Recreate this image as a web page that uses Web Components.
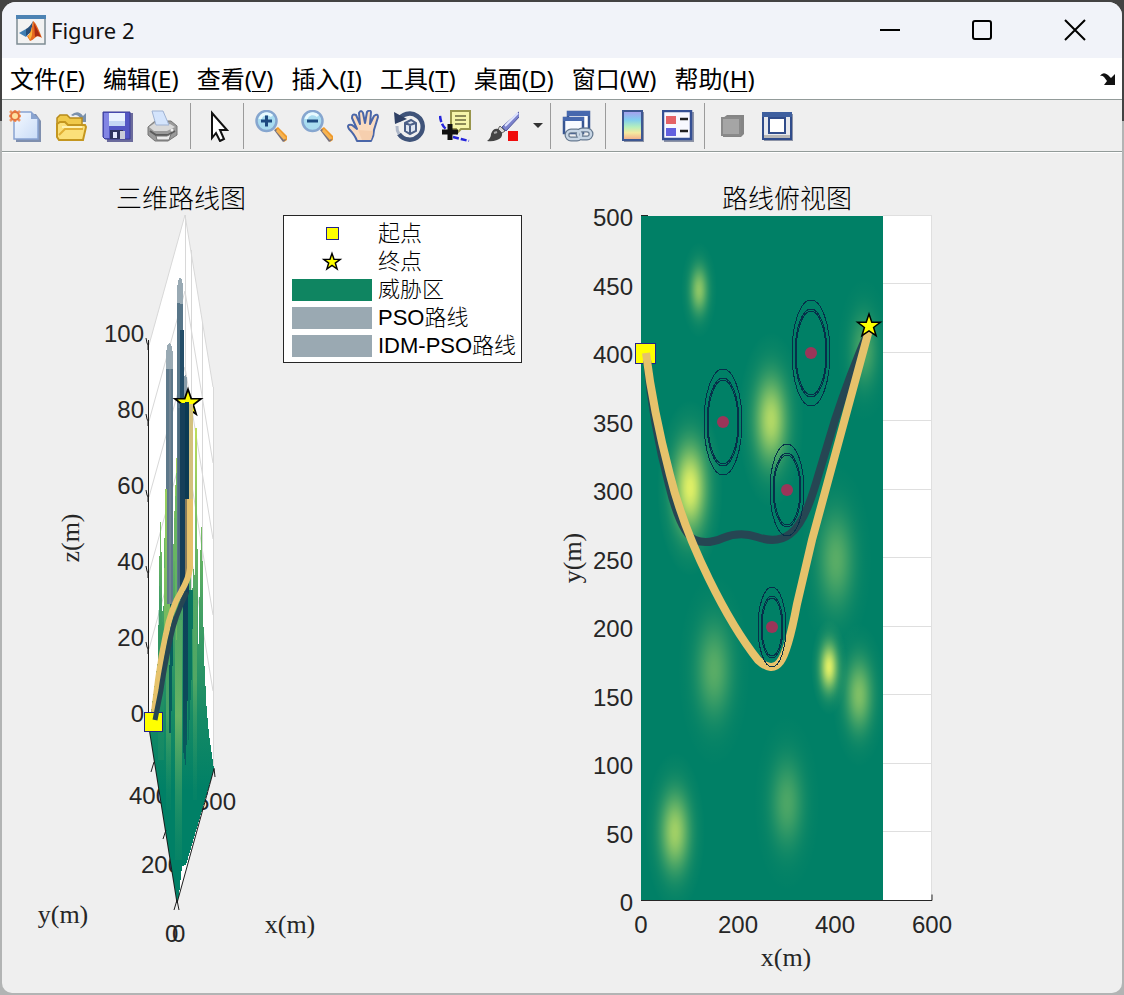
<!DOCTYPE html>
<html lang="zh-CN">
<head>
<meta charset="utf-8">
<title>Figure 2</title>
<style>
  html { height: 100%; background: #9c9c9c; }
  body {
    margin: 0; min-height: 100%; box-sizing: border-box; padding: 2px; display: flex;
    background: linear-gradient(#434343 0 121px, #b2b4b4 121px);
    font-family: "Noto Sans", "Noto Sans CJK SC", sans-serif;
  }
</style>
</head>
<body>
<figure-window>
  <title-bar slot="title">Figure 2</title-bar>
  <menu-bar slot="menu">
    <menu-item key="F">文件</menu-item>
    <menu-item key="E">编辑</menu-item>
    <menu-item key="V">查看</menu-item>
    <menu-item key="I">插入</menu-item>
    <menu-item key="T">工具</menu-item>
    <menu-item key="D">桌面</menu-item>
    <menu-item key="W">窗口</menu-item>
    <menu-item key="H">帮助</menu-item>
  </menu-bar>
  <tool-bar slot="tools">
    <tool-group>
      <tool-button icon="new" label="新建图窗"></tool-button>
      <tool-button icon="open" label="打开文件"></tool-button>
      <tool-button icon="save" label="保存图窗"></tool-button>
      <tool-button icon="print" label="打印图窗"></tool-button>
    </tool-group>
    <tool-group>
      <tool-button icon="pointer" label="编辑绘图" size="medium"></tool-button>
    </tool-group>
    <tool-group>
      <tool-button icon="zoomin" label="放大"></tool-button>
      <tool-button icon="zoomout" label="缩小"></tool-button>
      <tool-button icon="pan" label="平移"></tool-button>
      <tool-button icon="rotate" label="三维旋转"></tool-button>
      <tool-button icon="datatip" label="数据游标"></tool-button>
      <tool-button icon="brush" label="刷亮数据" size="wide"></tool-button>
      <tool-button icon="caret" label="刷亮颜色" size="tiny"></tool-button>
    </tool-group>
    <tool-group>
      <tool-button icon="link" label="链接绘图"></tool-button>
    </tool-group>
    <tool-group>
      <tool-button icon="colorbar" label="插入颜色栏" size="slim"></tool-button>
      <tool-button icon="legend" label="插入图例" size="slim"></tool-button>
    </tool-group>
    <tool-group>
      <tool-button icon="hide" label="隐藏绘图工具" size="slim"></tool-button>
      <tool-button icon="dock" label="显示绘图工具" size="slim"></tool-button>
    </tool-group>
  </tool-bar>
  <surface-plot></surface-plot>
  <plot-legend>
    <legend-row kind="square">起点</legend-row>
    <legend-row kind="star">终点</legend-row>
    <legend-row kind="green">威胁区</legend-row>
    <legend-row kind="grey">PSO路线</legend-row>
    <legend-row kind="grey">IDM-PSO路线</legend-row>
  </plot-legend>
  <top-view-plot></top-view-plot>
</figure-window>

<script>
function define(name, markup, ready) {
  const template = document.createElement('template');
  template.innerHTML = markup;
  customElements.define(name, class extends HTMLElement {
    connectedCallback() {
      if (this.shadowRoot) return;
      const root = this.attachShadow({ mode: 'open' });
      root.append(template.content.cloneNode(true));
      if (ready) ready(this, root);
    }
  });
}

const STAR = '0,-12 2.8,-3.8 11.4,-3.7 4.6,1.5 7.1,9.7 0,4.8 -7.1,9.7 -4.6,1.5 -11.4,-3.7 -2.8,-3.8';

const lens = sign => `
  <path d="M20 19l3-2 9 9v4l-3 2z" fill="#ef9a2b"/><path d="M19 20l2-1 10 11-3 2z" fill="#77717c"/><path d="M22 20l8 9" stroke="#f8b451" stroke-width="3"/>
  <circle cx="11.500" cy="11" r="10" fill="#a9dcf0" stroke="#86a6cf" stroke-width="2.500"/>
  <path d="M5 9a7 7 0 0 1 12-3" stroke="#e8faff" stroke-width="3" fill="none"/>
  <path d="${sign}" stroke="#1d4a80" stroke-width="3" fill="none"/>`;

const ICONS = {
  new: `<defs><linearGradient id="g" x1="0" y1="0" x2="1" y2="1"><stop stop-color="#f5f9ff"/><stop offset="1" stop-color="#c9dcf7"/></linearGradient></defs>
    <path d="M7 4h20l5 7v21H7z" fill="#7f8fae"/><path d="M5 2h17l7 7v20H5z" fill="url(#g)" stroke="#88a3d2" stroke-width="1.500"/><path d="M22 2v7h7z" fill="#8aa4d0"/>
    <g stroke="#ee9561" stroke-width="2.500"><path d="M6 0v12M0 6h12M1 1l10 10M11 1L1 11"/></g><circle cx="6" cy="6" r="4" fill="#ffe0a0" stroke="#e4723c" stroke-width="2"/>`,
  open: `<path d="M16 5q7-6 12 1l3-3v9h-8l3-3q-4-6-8-3z" fill="#7b91ab"/>
    <path d="M2 8l3-3h7l3 3h12v9H2z" fill="#f0c94a" stroke="#b78a1b" stroke-width="1.500"/><path d="M2 27V14l3-2h5l3 3h17l1 2-3 13H4z" fill="#fbe07a" stroke="#c4961f" stroke-width="2"/><path d="M4 25l6-6h18" stroke="#e0af35" stroke-width="2" fill="none"/><path d="M7 17h20" stroke="#fff2b0" stroke-width="2" fill="none"/>`,
  save: `<path d="M4 3h28v29H6z" fill="#6b6b9c"/><path d="M2 2h27v27H4l-2-2z" fill="#5357c4" stroke="#3a3c96"/><path d="M3 3h5v25H3z" fill="#8285e4"/><path d="M8 3h16v13H8z" fill="#eaf2ff"/><path d="M8 11h16v5H8z" fill="#c5d7f5"/><path d="M9 20h13v9H9z" fill="#2e3360"/><path d="M12 22h4v6h-4z" fill="#e4e8ff"/><path d="M19 21h5v8h-5z" fill="#c8ccd8"/>`,
  print: `<path d="M1 17l7-6h16l6 5v9l-9 6H8l-7-6z" fill="#9a9a9a" stroke="#777"/><path d="M2 17l6-4 15 1 5 3-8 4H7z" fill="#d9d9d9"/><path d="M5 1h11l6 14H9z" fill="#d4e4fc" stroke="#9fb2d2"/><path d="M3 21l6 4h12l7-4" stroke="#5c5c5c" stroke-width="2" fill="none"/><path d="M9 26h11l4-2-2 6H10z" fill="#ececec" stroke="#777"/><circle cx="25" cy="20" r="1.500" fill="#eee"/>`,
  pointer: `<path d="M11 3v25l4-5 4 8 4-2-4-9h7z" fill="#fff" stroke="#111" stroke-width="2"/>`,
  zoomin: lens('M6 11h11M11.500 5.500v11'),
  zoomout: lens('M6 11h11'),
  pan: `<path d="M10 31Q8 25 2 19q-3-5 3-4l5 4L5 8q0-5 4-3l4 9-1-11q2-4 4 0l2 10 2-11q3-3 4 0l-1 12 4-8q4-3 4 1l-4 13q0 6-3 11z" fill="#fbdcc0" stroke="#4a66a8" stroke-width="2" stroke-linejoin="round"/><path d="M11 20l4 10h9q2-5 2-9z" fill="#f6cfae"/>`,
  rotate: `<path d="M5 11A13 13 0 1 1 6 24" fill="none" stroke="#3f5379" stroke-width="4.500"/><path d="M6 24A13 13 0 0 1 4 16" fill="none" stroke="#aeb7c8" stroke-width="3"/><path d="M1 2l13 7-12 5z" fill="#2f4064"/><path d="M12 13l6-3 5 3v8l-6 3-5-3zM12 13l5 2 6-2M17 15v9" fill="#dfe6f1" stroke="#4b5f87" stroke-width="2"/>`,
  datatip: `<path d="M1 6q1 9 6 13M14 27l8 2 8 2" stroke="#2424dc" stroke-width="2.500" stroke-dasharray="6 2" fill="none"/><path d="M12 1h19v18H22l-4 4-1-4h-5z" fill="#f6f5a9" stroke="#98954c" stroke-width="2"/><path d="M16 6h11M16 10h11M16 14h11" stroke="#8c8a57" stroke-width="2"/><path d="M11 14v16M3 22h16" stroke="#111" stroke-width="5"/>`,
  brush: `<path d="M33 1L15 17l4 4L33 6z" fill="#7b82cc" stroke="#4d559d"/><path d="M31 3L18 16" stroke="#dfe4ff" stroke-width="2"/><path d="M13 16l5 5-3 2-4-4z" fill="#d9d9d9" stroke="#666"/><path d="M0 31q4-3 4-7 2-6 7-5l4 4q1 5-5 7-5 2-10 1z" fill="#454545"/><path d="M7 23l3-1" stroke="#aaa" stroke-width="2"/><path d="M21 21h10v10H21z" fill="#f00c0c"/>`,
  caret: `<path d="M12 13h10l-5 5z" fill="#333"/>`,
  link: `<path d="M6 2h21v17H6z" fill="#fff" stroke="#385692" stroke-width="2.500"/><path d="M5 1h23v5H5z" fill="#4668ae"/><path d="M2 8h19v15H2z" fill="#f8faff" stroke="#385692" stroke-width="2.500"/><path d="M1 7h21v4H1z" fill="#4668ae"/><g fill="none" stroke-width="5" stroke="#687b91"><rect x="5" y="21" width="14" height="8" rx="4"/><rect x="16" y="20" width="13" height="8" rx="4"/></g><g fill="none" stroke-width="2.500" stroke="#c8d6e5"><rect x="5" y="21" width="14" height="8" rx="4"/><rect x="16" y="20" width="13" height="8" rx="4"/></g>`,
  colorbar: `<defs><linearGradient id="g" x1="0" y1="0" x2="0" y2="1"><stop stop-color="#a99bed"/><stop offset=".3" stop-color="#80cdef"/><stop offset=".55" stop-color="#b5efbd"/><stop offset=".75" stop-color="#f5eaa0"/><stop offset="1" stop-color="#f3a989"/></linearGradient></defs><path d="M7 2h20v30H7z" fill="#8c93a6"/><path d="M6 1h19v29H6z" fill="url(#g)" stroke="#3d5791" stroke-width="2"/>`,
  legend: `<path d="M2 2h30v30H2z" fill="#8c93a6"/><path d="M1 1h28v28H1z" fill="#f7f8ff" stroke="#344f94" stroke-width="2.500"/><path d="M4 6h10v8H4z" fill="#e46267"/><path d="M4 18h10v8H4z" fill="#6260df"/><path d="M18 9h8M18 21h8" stroke="#222" stroke-width="2.500"/>`,
  hide: `<path d="M7 8l4-3h17v19l-3 3H7z" fill="#858585"/><path d="M6 8h18v17H6z" fill="#a5a5a5" stroke="#898989" stroke-width="2"/>`,
  dock: `<path d="M3 4h29v27H3z" fill="#8c93a6"/><path d="M2 3h28v26H2z" fill="#e7e9ee" stroke="#304c8b" stroke-width="2"/><path d="M1 2h30v5H1z" fill="#3e5f9f"/><path d="M8 8h16v15H8z" fill="#fff" stroke="#304c8b" stroke-width="2"/><path d="M3 25h26v3H3z" fill="#b7b7b7"/>`
};

define('figure-window', `
  <style>
    :host { flex: 1; min-width: 0; display: flex; flex-direction: column; overflow: hidden; border-radius: 14px 14px 10px 10px; background: #efefef; }
    main { flex: 1; display: grid; grid-template-columns: minmax(0, 281fr) minmax(0, 239fr) minmax(0, 600fr); align-items: start; }
  </style>
  <slot name="title"></slot><slot name="menu"></slot><slot name="tools"></slot>
  <main><slot></slot></main>`);

define('title-bar', `
  <style>
    :host { display: flex; align-items: center; height: 56px; background: #f1f3f9; color: #111; }
    .logo { width: 30px; height: 30px; margin: 0 5px 0 14px; }
    h1 { flex: 1; margin: 0; font-size: 22px; line-height: 32px; font-weight: 400; }
    button { border: 0; padding: 0; background: none; width: 92px; height: 56px; display: grid; place-items: center; }
    button:last-child { width: 94px; }
    button svg { width: 22px; height: 22px; fill: none; stroke: #000; stroke-width: 2; }
  </style>
  <svg class="logo" viewBox="0 0 30 30" aria-hidden="true">
    <rect x="1" y="1" width="28" height="28" fill="#f2f2f2" stroke="#7e8c93" stroke-width="1.500"/><rect x="0" y="0" width="30" height="4" fill="#4d83b4"/>
    <path d="M3 18l7-4 4 3-4 5z" fill="#3f7fb4"/><path d="M10 14q4-2 7-8l-2 11-5 4z" fill="#274f79"/><path d="M17 6q3 1 9 17-4-3-6-1-3 3-6 4l-3-5q4-1 6-15z" fill="#e56a20"/><path d="M18 8q4 8 7 14-4-2-6 0z" fill="#a92b13"/><path d="M16 13q1 7-2 12l-2-4q3-3 4-8z" fill="#fab13c"/>
  </svg>
  <h1><slot></slot></h1>
  <button aria-label="最小化"><svg viewBox="0 0 22 22"><path d="M1 11h20"/></svg></button>
  <button aria-label="最大化"><svg viewBox="0 0 22 22"><rect x="2" y="2" width="18" height="18" rx="2"/></svg></button>
  <button aria-label="关闭"><svg viewBox="0 0 22 22"><path d="M1 1l20 20M21 1L1 21"/></svg></button>`);

define('menu-bar', `
  <style>
    :host { display: flex; align-items: center; height: 41px; background: #fff; border-bottom: 1px solid #929b99; }
    nav { flex: 1; display: flex; gap: 18px; padding-left: 8px; }
    button { border: 0; padding: 0; background: none; width: 16px; height: 16px; margin-right: 6px; }
    svg { display: block; width: 16px; height: 16px; }
  </style>
  <nav><slot></slot></nav>
  <button aria-label="停靠图窗"><svg viewBox="0 0 16 16"><path d="M0 5q3-5 8-1l3 3 4-4v11H4l3-4-3-4Q2 4 0 5z" fill="#111"/></svg></button>`);

define('menu-item', `
  <style>
    :host { display: block; }
    button { border: 0; padding: 0; background: none; color: #000; font-family: inherit; font-size: 24px; line-height: 36px; white-space: nowrap; }
    u { text-decoration-thickness: 1px; text-underline-offset: 3px; }
  </style>
  <button><slot></slot>(<u></u>)</button>`, (host, root) => {
  root.querySelector('u').textContent = host.getAttribute('key');
});

define('tool-bar', `
  <style>
    :host { display: flex; align-items: center; height: 52px; box-sizing: border-box; border-bottom: 1px solid #929b99; box-shadow: 0 1px #fff; background: #efefef; }
  </style>
  <slot></slot>`);

define('tool-group', `
  <style>
    :host { display: flex; align-items: center; height: 46px; padding-right: 4px; border-right: 1px solid #9b9b9b; margin-right: 4px; }
    :host(:last-of-type) { border-right: 0; }
  </style>
  <slot></slot>`);

define('tool-button', `
  <style>
    :host { display: block; width: 46px; }
    :host([size=slim]) { width: 45px; } :host([size=medium]) { width: 44px; }
    :host([size=wide]) { width: 50px; } :host([size=tiny]) { width: 18px; }
    button { border: 0; padding: 0; background: none; width: 100%; height: 46px; display: flex; align-items: center; justify-content: center; }
    svg { flex: none; width: 32px; height: 32px; }
  </style>
  <button><svg viewBox="0 0 32 32"></svg></button>`, (host, root) => {
  root.querySelector('button').setAttribute('aria-label', host.getAttribute('label'));
  root.querySelector('svg').innerHTML = ICONS[host.getAttribute('icon')];
});

define('plot-legend', `
  <style>
    :host { display: block; box-sizing: border-box; margin-top: 63px; padding: 4px 0 2px 8px; border: 1px solid #262626; background: #fff; }
  </style>
  <slot></slot>`);

define('legend-row', `
  <style>
    :host { display: flex; align-items: center; gap: 6px; height: 28px; color: #000; font: 300 22px/28px "Liberation Sans", "Noto Sans CJK SC", sans-serif; white-space: nowrap; }
    svg { flex: none; width: 80px; height: 28px; }
  </style>
  <svg viewBox="0 0 80 28" aria-hidden="true"></svg><span><slot></slot></span>`, (host, root) => {
  root.querySelector('svg').innerHTML = {
    square: '<rect x="34.500" y="7.500" width="12" height="12" fill="#ff0" stroke="#22228a"/>',
    star: `<polygon points="${STAR}" transform="translate(40 14) scale(.72)" fill="#ff0" stroke="#000" stroke-width="2"/>`,
    green: '<rect y="3" width="80" height="22" fill="#0f8561"/>',
    grey: '<rect y="3" width="80" height="22" fill="#9aa9b2"/>'
  }[host.getAttribute('kind')];
});

const PLOT_STYLE = `
  <style>
    :host { display: block; min-width: 0; }
    svg { display: block; width: 100%; height: auto; overflow: visible; }
    text { fill: #262626; font: 24px "Liberation Sans", sans-serif; }
    .title { fill: #000; font: 300 26px "Noto Sans CJK SC", sans-serif; text-anchor: middle; }
    .label { font: 26px "Liberation Serif", serif; text-anchor: middle; }
    .y { text-anchor: end; } .x { text-anchor: middle; }
  </style>`;

/* Perspective view: z levels are 76 units apart along every vertical edge. */
define('surface-plot', PLOT_STYLE + `
  <svg viewBox="2 152 281 840" role="img" aria-label="三维路线图">
    <defs>
      <linearGradient id="land" gradientUnits="userSpaceOnUse" x1="0" y1="420" x2="0" y2="790">
        <stop stop-color="#c4e05c"/><stop offset=".25" stop-color="#7fc263"/><stop offset=".5" stop-color="#48a265"/><stop offset=".8" stop-color="#158a65"/><stop offset="1" stop-color="#008066"/>
      </linearGradient>
      <linearGradient id="ridge" x1="0" y1="0" x2="0" y2="1"><stop stop-color="#9bce62" stop-opacity=".2"/><stop offset=".4" stop-color="#7dbd63"/><stop offset="1" stop-color="#2a9465" stop-opacity=".2"/></linearGradient>
      <linearGradient id="deep" x1="0" y1="0" x2="0" y2="1"><stop stop-color="#0d3f5a"/><stop offset=".6" stop-color="#0c4a5b"/><stop offset="1" stop-color="#06605f"/></linearGradient>
    </defs>
    <polygon points="185,215 149,345 149,722 177,903 214,769 213,387" fill="#fff"/>
    <g id="grid" fill="none" stroke="#d8d8d8"></g>
    <text class="y" x="169" y="804">400</text><text class="y" x="181" y="873">200</text><text x="196" y="810">500</text>
    <g shape-rendering="crispEdges">
      <path fill="url(#land)" d="M149 728L158 660 160 522 161 522 163 640 165 505 167 440 169 540 171 560 172 600 174 525 177 445 179 530 184 600 190 570 192 597 194 560 195 589 196 428 197 428 198 668 201 527 202 527 204 660 205 672 206 700 209 735 214 769 186 865 182 866 179 895 177 903z"/>
      <path d="M158 640l1-60 5 60 0 120-6 0z" fill="#2e9665" opacity=".3"/>
      <path d="M165 500l4-60 0 100 1 100-6 0z" fill="#a6d65b" opacity=".5"/>
      <path d="M174 530l4-90 1 150-3 60z" fill="#69b760" opacity=".8"/>
      <rect x="175" y="620" width="7" height="240" fill="url(#ridge)" opacity=".8"/>
      <rect x="166" y="650" width="5" height="160" fill="url(#ridge)" opacity=".5"/>
      <rect x="193" y="600" width="4" height="200" fill="url(#ridge)" opacity=".5"/>
      <path d="M170 600h4l-3 133h-2z" fill="#075e5d"/>
      <path d="M183 590h7l-4 178-3-18z" fill="url(#deep)"/>
      <path d="M188 590h5l-1 80-4 80z" fill="#087460"/>
      <path d="M166 369h7v235h-6z" fill="#5d788a"/><path d="M169 369h2v235h-2z" fill="#718493"/>
      <path d="M166 369v-16q1-10 4-10 2 1 3 12v14z" fill="#99aab4"/>
      <path d="M177 303h6v297h-6z" fill="#587689"/><path d="M180 330h4v270h-4z" fill="#234d68"/>
      <path d="M177 303v-14q1-11 3-11 3 0 3 12v14z" fill="#99aab4"/>
      <path d="M184 402v-24q2-8 3 2v22z" fill="#899da9"/>
      <path d="M195 428h2v150h-2z" fill="url(#land)"/>
    </g>
    <g id="axis" fill="none" stroke="#1c1c1c"></g>
    <rect x="144.500" y="712.500" width="18" height="19" fill="#ff0" stroke="#22228a"/>
    <polygon points="${STAR}" transform="translate(188 403) scale(1.150)" fill="#ff0" stroke="#000" stroke-width="1.500"/>
    <g shape-rendering="crispEdges">
      <path d="M189 404h4v100h-4z" fill="#d3c17e"/>
      <path d="M180 403h9v190h-9z" fill="#163f59"/><path d="M178 408h2v190h-2z" fill="#4b6a7d"/><path d="M185 402h4v98h-4z" fill="#0c3a53"/>
      <path d="M185 499h3v80h-3z" fill="#8a7c58"/>
    </g>
    <path d="M190 499V568Q189 578 181 592 171 608 166 634 161 657 158 680L154 712" fill="none" stroke="#e6c26b" stroke-width="6"/>
    <path d="M187 592Q175 616 170 640 163 675 161 690L155 720" fill="none" stroke="#264653" stroke-width="5"/>
    <text class="title" x="181" y="208">三维路线图</text>
    <g id="levels"></g>
    <text x="165" y="942">0</text><text x="172" y="942">0</text>
    <text class="label" x="63" y="923">y(m)</text><text class="label" x="290" y="933">x(m)</text>
    <text class="label" transform="translate(79 538) rotate(-90)">z(m)</text>
  </svg>`, (host, root) => {
  let grid = 'M185.500 215V730M191.500 250V700M202.500 323V730M213.500 387V769', ticks = '', text = '';
  for (let i = 0; i < 5; i++) grid += `M149 ${345 + i * 76}L185 ${215 + i * 76}L213 ${387 + i * 76}`;
  for (let i = 0; i < 6; i++) {
    ticks += `M146 ${338 + i * 76}l1 5 1 2v5`;
    text += `<text class="y" x="144" y="${342 + i * 76}">${100 - i * 20}</text>`;
  }
  root.querySelector('#grid').innerHTML = `<path d="${grid}"/>`;
  root.querySelector('#axis').innerHTML = `<path d="${ticks}M148.500 340V716M149 728L177 903L214 769M154 762l-3 10M166 830l-3 9M214 768l1 9M177 900l-3 10M177 900l2 10"/>`;
  root.querySelector('#levels').innerHTML = text;
});

define('top-view-plot', PLOT_STYLE + `
  <svg viewBox="522 152 600 840" role="img" aria-label="路线俯视图">
    <defs>
      <radialGradient id="peak"></radialGradient>
      <clipPath id="area"><rect x="641" y="216" width="242" height="685"/></clipPath>
    </defs>
    <rect x="641" y="216" width="291" height="685" fill="#fff"/>
    <g id="grid" stroke="#dfdfdf" fill="none"></g>
    <rect x="641" y="216" width="242" height="685" fill="#008066"/>
    <g id="hills" clip-path="url(#area)" fill="url(#peak)"></g>
    <path d="M641 215.500h7M641 900.500h291v-6" stroke="#262626" fill="none"/>
    <rect x="635.500" y="343.500" width="20" height="20" fill="#ff0" stroke="#22228a"/>
    <path d="M647 360Q653 425 669 485 681 534 695 540 707 545 723 538 740 531 757 537 777 544 790 534 804 524 816 483L835 420Q850 374 869 330" fill="none" stroke="#264653" stroke-width="8"/>
    <path d="M646 353Q653 410 670 475 682 524 709 579 734 630 758 660 772 673 780 662 788 652 797 604L812 540 869 330" fill="none" stroke="#e6c26b" stroke-width="8"/>
    <g id="threats"></g>
    <polygon points="${STAR}" transform="translate(869 326)" fill="#ff0" stroke="#000" stroke-width="1.500"/>
    <text class="title" x="787" y="208">路线俯视图</text>
    <g id="labels"></g>
    <text class="label" x="786" y="966">x(m)</text>
    <text class="label" transform="translate(581 558) rotate(-90)">y(m)</text>
  </svg>`, (host, root) => {
  const $ = s => root.querySelector(s);
  /* Gaussian falloff out to three standard deviations. */
  let stops = '';
  for (let i = 0; i <= 12; i++) stops += `<stop offset="${i / 12}" stop-color="#ffff66" stop-opacity="${i === 12 ? 0 : Math.exp(-Math.pow(i / 4, 2) / 2)}"/>`;
  $('#peak').innerHTML = stops;
  /* centre x, centre y, deviation x, height */
  const hills = [[699, 290, 6, .55], [771, 420, 11, .7], [690, 488, 11, .88], [864, 350, 9, .3], [836, 560, 12, .35],
    [714, 670, 12, .35], [829, 667, 6, .88], [859, 695, 9, .5], [787, 803, 11, .3], [675, 832, 10, .63]];
  $('#hills').innerHTML = hills.map(([x, y, s, h]) => `<ellipse cx="${x}" cy="${y}" rx="${s * 3}" ry="${s * 8}" opacity="${h}"/>`).join('');
  const threats = [[723, 422, 19, 53], [811, 353, 19, 53], [787, 490, 17, 46], [772, 627, 14, 40]];
  $('#threats').innerHTML = threats.map(([x, y, rx, ry]) => `<g fill="none" stroke="#06304a" shape-rendering="crispEdges"><ellipse cx="${x}" cy="${y}" rx="${rx}" ry="${ry}"/><ellipse cx="${x}" cy="${y}" rx="${rx - 3}" ry="${ry - 9}"/><ellipse cx="${x}" cy="${y}" rx="${rx - 4}" ry="${ry - 11}"/></g><circle cx="${x}" cy="${y}" r="6" fill="#9b3559"/>`).join('');
  let lines = 'M883 215.500h49M931.500 216V901', text = '';
  for (let i = 0; i <= 10; i++) {
    const y = 901 - i * 68.5;
    if (i > 0 && i < 10) lines += `M883 ${Math.floor(y) - .5}h48`;
    text += `<text class="y" x="633" y="${Math.round(y) + 10}">${i * 50}</text>`;
  }
  for (let i = 0; i <= 3; i++) text += `<text class="x" x="${641 + i * 97}" y="933">${i * 200}</text>`;
  $('#grid').innerHTML = `<path d="${lines}"/>`;
  $('#labels').innerHTML = text;
});
</script>
</body>
</html>
